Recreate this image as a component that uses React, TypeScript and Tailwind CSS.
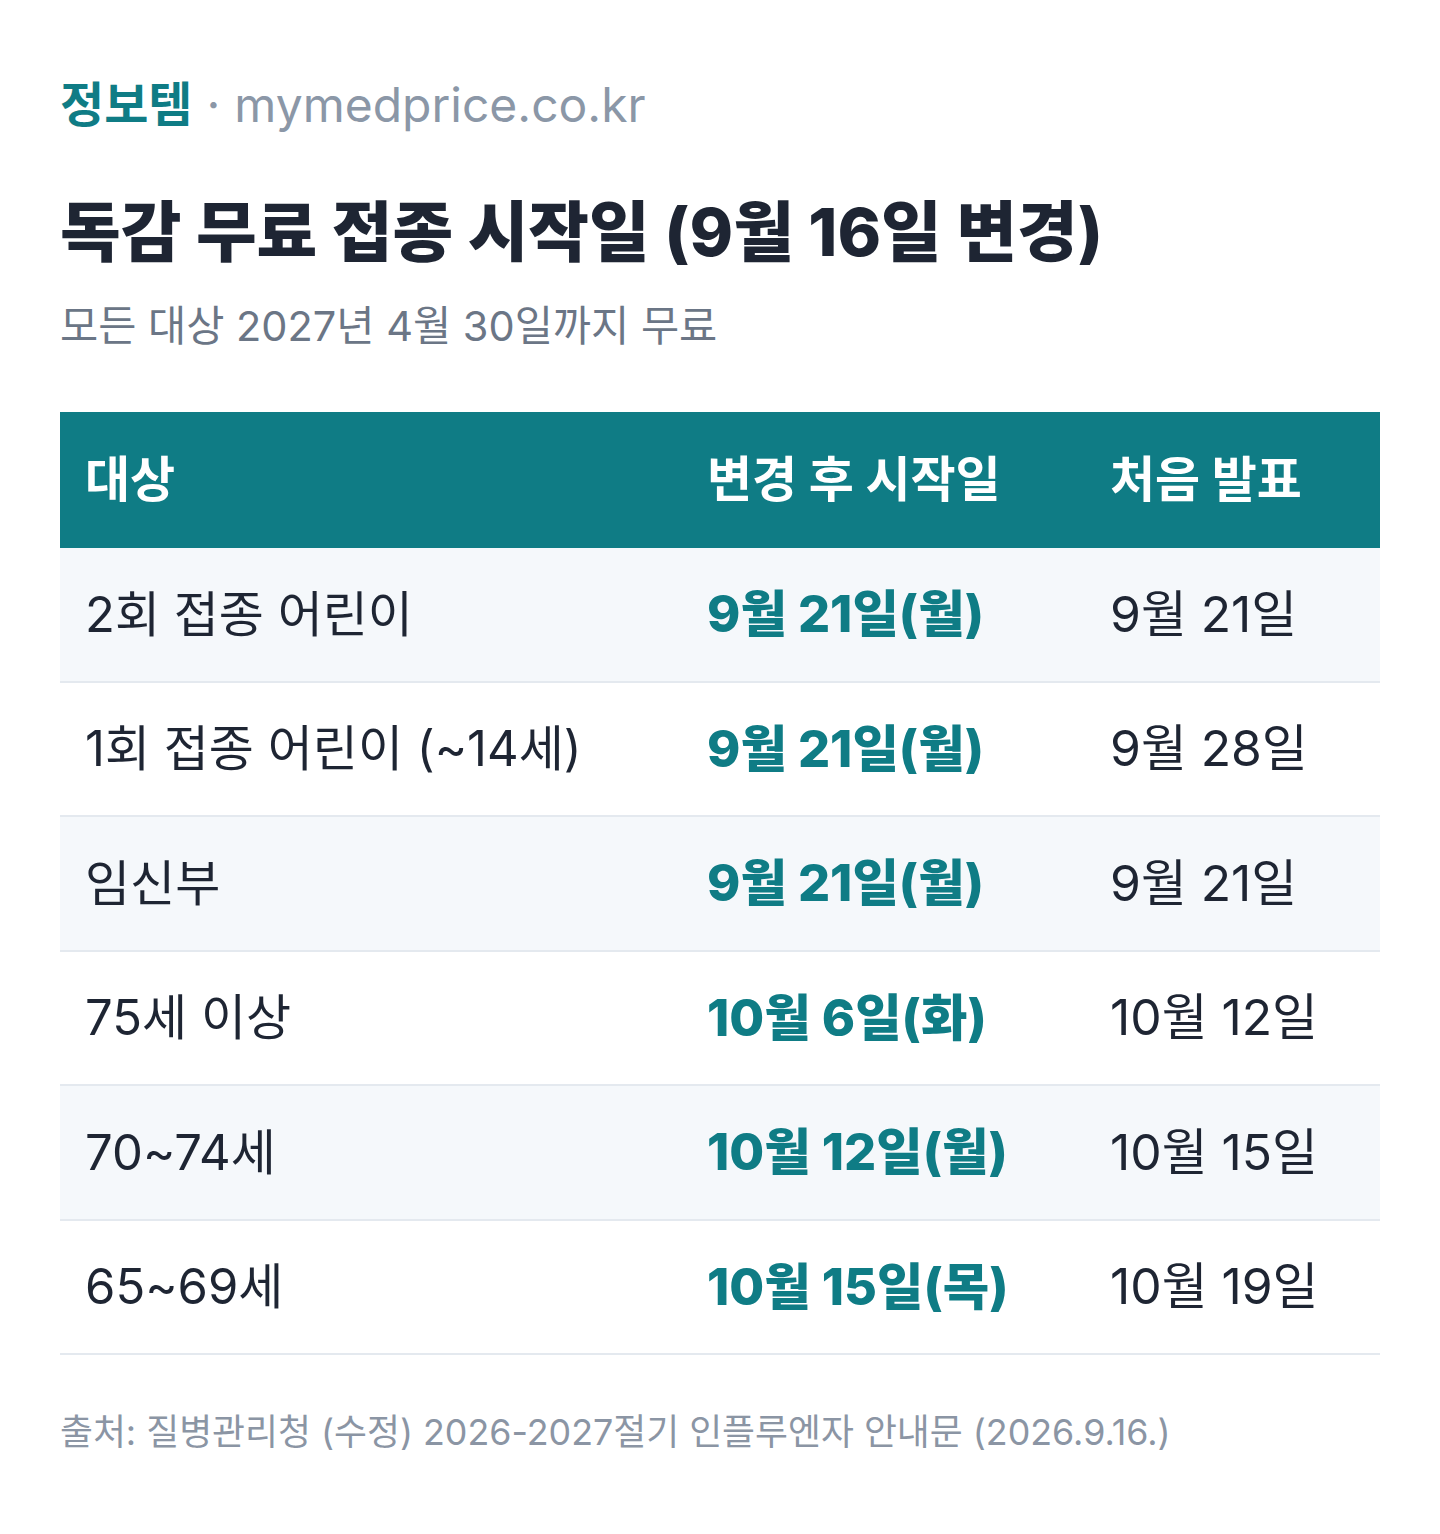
import React from "react";

const rows = [
  { who: "2회 접종 어린이", start: "9월 21일(월)", first: "9월 21일" },
  { who: "1회 접종 어린이 (~14세)", start: "9월 21일(월)", first: "9월 28일" },
  { who: "임신부", start: "9월 21일(월)", first: "9월 21일" },
  { who: "75세 이상", start: "10월 6일(화)", first: "10월 12일" },
  { who: "70~74세", start: "10월 12일(월)", first: "10월 15일" },
  { who: "65~69세", start: "10월 15일(목)", first: "10월 19일" },
];

const font = { fontFamily: 'Inter, "Noto Sans CJK KR", sans-serif' };

export default function App() {
  return (
    <div className="min-h-screen w-[1440px] bg-white px-[60px] pt-[80px]" style={font}>
      <div className="flex items-center h-[50px] text-[48px] leading-[50px]">
        <span className="font-bold text-[#0f7c85]">정보템</span>
        <span className="text-[#8b97a7] ml-[14px]">·</span>
        <span className="text-[#8b97a7] ml-[14px]">mymedprice.co.kr</span>
      </div>

      <h1 className="mt-[62px] h-[80px] text-[66px] leading-[80px] font-extrabold text-[#1e2533]">
        독감 무료 접종 시작일 (9월 16일 변경)
      </h1>

      <p className="mt-[29px] h-[50px] text-[41.5px] leading-[50px] text-[#6b7686]">
        모든 대상 2027년 4월 30일까지 무료
      </p>

      <div className="mt-[61px] w-[1320px]">
        <div className="grid grid-cols-[623px_403px_294px] h-[136px] items-center bg-[#0f7c85] text-white text-[49px] font-bold">
          <div className="pl-[25px]">대상</div>
          <div className="pl-[24px]">변경 후 시작일</div>
          <div className="pl-[24px]">처음 발표</div>
        </div>
        {rows.map((r, i) => (
          <div
            key={i}
            className={`grid grid-cols-[623px_403px_294px] h-[134.5px] items-center border-b-2 border-[#e4e9ef] ${
              i % 2 === 0 ? "bg-[#f5f8fb]" : "bg-white"
            }`}
          >
            <div className="pl-[25px] text-[49px] text-[#1e2533]">{r.who}</div>
            <div className="pl-[24px] text-[50.5px] font-extrabold text-[#0f7c85]">{r.start}</div>
            <div className="pl-[24px] text-[49.8px] text-[#1e2533]">{r.first}</div>
          </div>
        ))}
      </div>

      <p className="mt-[52px] h-[50px] text-[35.8px] leading-[50px] text-[#8b95a4]">
        출처: 질병관리청 (수정) 2026-2027절기 인플루엔자 안내문 (2026.9.16.)
      </p>
    </div>
  );
}
